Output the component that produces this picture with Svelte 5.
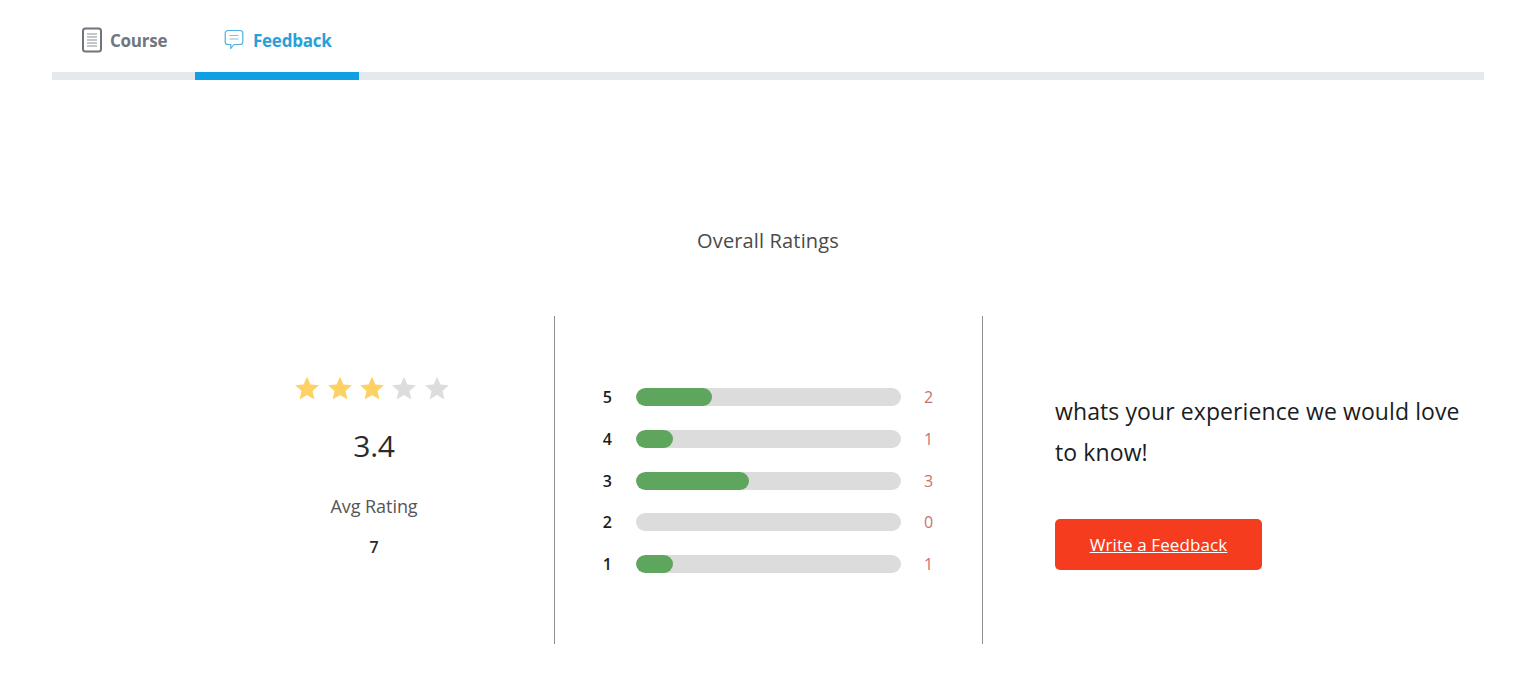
<script>
  const bars = [
    { n: 5, w: 76, c: 2 },
    { n: 4, w: 37, c: 1 },
    { n: 3, w: 113, c: 3 },
    { n: 2, w: 0, c: 0 },
    { n: 1, w: 37, c: 1 }
  ];
  const stars = [true, true, true, false, false];
</script>

<div class="page">
  <nav class="tabs">
    <div class="tab course">
      <svg width="22" height="26" viewBox="0 0 22 26" fill="none">
        <rect x="2" y="1.5" width="18" height="23" rx="2.5" stroke="#6f757b" stroke-width="2" />
        <path d="M6 7h10M6 10h10M6 13h10M6 16h10M6 19h10" stroke="#8b9096" stroke-width="1.2" />
      </svg>
      <span>Course</span>
    </div>
    <div class="tab feedback">
      <svg width="20" height="22" viewBox="0 0 20 22" fill="none">
        <path d="M4 1.5h12a2.8 2.8 0 0 1 2.8 2.8v8.4a2.8 2.8 0 0 1-2.8 2.8H10l-3.2 4v-4H4a2.8 2.8 0 0 1-2.8-2.8V4.300A2.800 2.800 0 0 1 4 1.500z" stroke="#4fb0df" stroke-width="1.200" stroke-linejoin="round" />
        <path d="M5.500 6.500h9M5.500 10h9" stroke="#7cc4e8" stroke-width="1.200" />
      </svg>
      <span>Feedback</span>
    </div>
  </nav>

  <h2 class="title">Overall Ratings</h2>

  <section class="cols">
    <div class="col left">
      <div class="stars">
        {#each stars as on}
          <svg width="26" height="26" viewBox="0 0 24 24">
            <path d="M12 1.500l3.200 7.300 7.800.7-5.900 5.200 1.800 7.800L12 18.400l-6.900 4.100 1.800-7.800L1 9.500l7.800-.7z" fill={on ? '#fdd163' : '#dddddd'} />
          </svg>
        {/each}
      </div>
      <div class="avg">3.4</div>
      <div class="label">Avg Rating</div>
      <div class="count">7</div>
    </div>

    <div class="col mid">
      {#each bars as b}
        <div class="row">
          <span class="num">{b.n}</span>
          <div class="track">
            {#if b.w}<div class="fill" style="width: {b.w}px"></div>{/if}
          </div>
          <span class="c">{b.c}</span>
        </div>
      {/each}
    </div>

    <div class="col right">
      <p class="msg">whats your experience we would love to know!</p>
      <button class="cta">Write a Feedback</button>
    </div>
  </section>
</div>

<style>
  :global(body) {
    margin: 0;
    background: #fff;
    font-family: "Open Sans", "Noto Sans", sans-serif;
  }
  .page {
    padding: 0 52px;
    height: 692px;
    box-sizing: border-box;
    overflow: hidden;
  }
  .tabs {
    display: flex;
    height: 72px;
    border-bottom: 8px solid #e5e8ec;
  }
  .tab {
    display: flex;
    align-items: center;
    gap: 8px;
    height: 80px;
    box-sizing: border-box;
    padding-top: 8px;
    font-size: 17px;
    font-weight: 700;
    letter-spacing: -0.25px;
    border-bottom: 8px solid transparent;
  }
  .course {
    width: 143px;
    padding-left: 29px;
    gap: 7px;
    color: #6f7780;
  }
  .feedback {
    width: 164px;
    padding-left: 29px;
    gap: 9px;
    color: #2a9fd8;
    border-bottom-color: #0f9fe3;
  }
  .title {
    margin: 0;
    padding-top: 147px;
    text-align: center;
    font-size: 20px;
    line-height: 28px;
    font-weight: 400;
    letter-spacing: 0.15px;
    color: #4a4a4a;
  }
  .cols {
    display: flex;
    margin-top: 61px;
    height: 328px;
  }
  .col {
    box-sizing: border-box;
    height: 100%;
  }
  .left {
    width: 503px;
    padding-left: 142px;
    padding-top: 60px;
    border-right: 1px solid #8f8f8f;
    display: flex;
    flex-direction: column;
    align-items: center;
  }
  .stars {
    display: flex;
    gap: 6.300px;
    height: 28px;
    margin-left: -4px;
    margin-top: -1px;
    margin-bottom: 1px;
  }
  .avg {
    margin-top: 23px;
    font-size: 30px;
    line-height: 38px;
    color: #2b2b2b;
    letter-spacing: -0.3px;
  }
  .label {
    margin-top: 29px;
    font-size: 18px;
    line-height: 24px;
    letter-spacing: -0.05px;
    color: #555;
  }
  .count {
    margin-top: 18px;
    font-size: 16px;
    line-height: 22px;
    font-weight: 600;
    color: #2b2b2b;
  }
  .mid {
    width: 428px;
    padding-top: 72px;
    border-right: 1px solid #8f8f8f;
    display: flex;
    flex-direction: column;
    gap: 23.800px;
  }
  .row {
    display: flex;
    align-items: center;
    height: 18px;
  }
  .num {
    width: 81px;
    padding-right: 24px;
    box-sizing: border-box;
    text-align: right;
    font-size: 16px;
    font-weight: 600;
    color: #1c1c1c;
  }
  .track {
    width: 265px;
    height: 18px;
    border-radius: 9px;
    background: #dcdcdc;
    overflow: hidden;
  }
  .fill {
    height: 100%;
    border-radius: 9px;
    background: #5ea65d;
  }
  .c {
    margin-left: 23px;
    font-size: 16px;
    color: #c9716f;
  }
  .right {
    flex: 1;
    padding-left: 72px;
    padding-top: 75px;
  }
  .msg {
    margin: 0;
    width: 415px;
    font-size: 23px;
    font-weight: 500;
    line-height: 41px;
    letter-spacing: 0.1px;
    color: #1a1d22;
  }
  .cta {
    display: block;
    margin-top: 46px;
    width: 207px;
    height: 51px;
    border: none;
    border-radius: 5px;
    background: #f63c1e;
    color: #fff;
    font: inherit;
    font-size: 17px;
    letter-spacing: 0.1px;
    text-decoration: underline;
    padding: 0;
  }
</style>
